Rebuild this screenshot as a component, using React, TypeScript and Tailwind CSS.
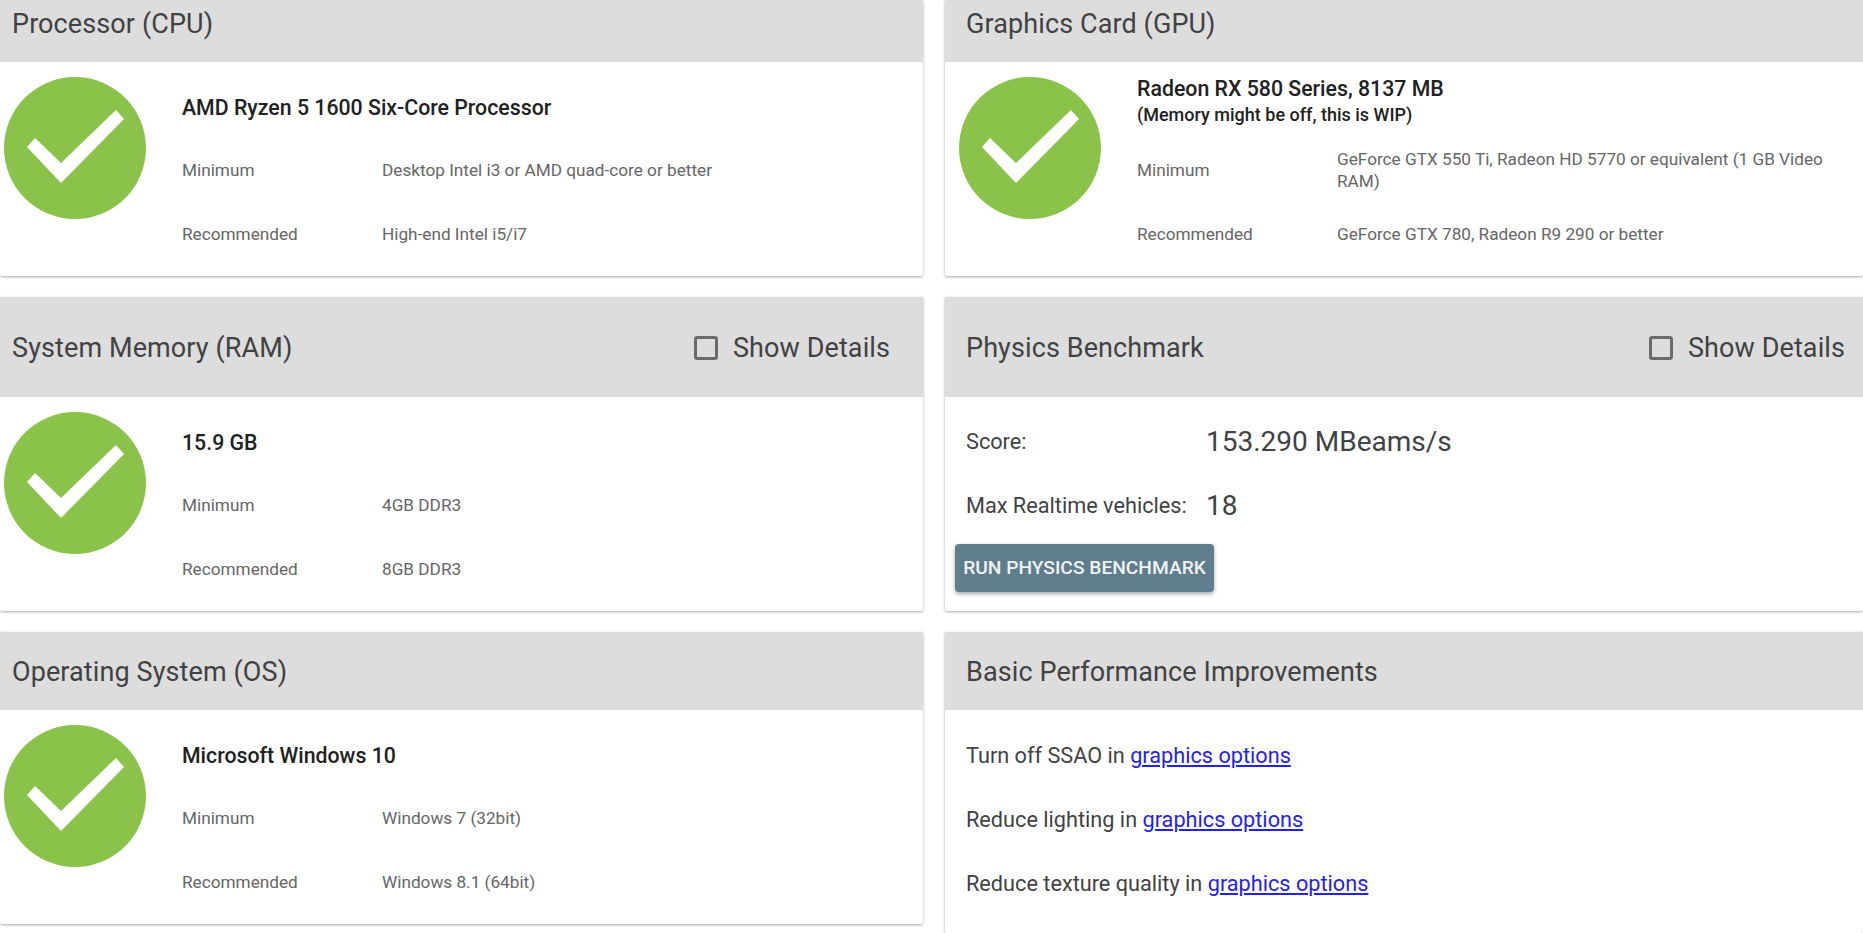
import type { ReactNode } from "react";

const F = "font-['Roboto',sans-serif]";

function Check({ right }: { right?: boolean }) {
  return (
    <svg viewBox="0 0 142 142" className={`w-[142px] h-[142px] shrink-0 ${right ? "ml-[14px]" : "ml-1"}`}>
      <circle cx="71" cy="71" r="71" fill="#8bc34a" />
      <polygon points="23,70 31,61 57,86 112,33 120,42 57,106" fill="#fff" />
    </svg>
  );
}

function ShowDetails() {
  return (
    <label className="flex items-center text-[27px] text-[#424242]">
      <span className="w-[24px] h-[24px] border-[3px] border-[#6b6b6b] rounded-[3px] mr-[15px] -mt-[2px]" />
      Show Details
    </label>
  );
}

function Card({ title, head, children, body, className = "" }: { title: string; head: string; children: ReactNode; body: string; className?: string }) {
  return (
    <section className={`bg-white shadow-[0_1px_3px_rgba(0,0,0,0.35)] rounded-b-[2px] ${className}`}>
      <header className={`${head} bg-[#dddddd] flex items-center justify-between text-[27px] tracking-[0.1px] text-[#424242]`}>
        <span>{title}</span>
      </header>
      <div className={body}>{children}</div>
    </section>
  );
}

function DetailCard({ title, right, children }: { title: string; right?: boolean; children: ReactNode }) {
  return (
    <section className="bg-white shadow-[0_1px_3px_rgba(0,0,0,0.35)] rounded-b-[2px]">
      <header className={`h-[100px] bg-[#dddddd] flex items-center justify-between pt-[3px] text-[27px] tracking-[0.1px] text-[#424242] ${right ? "pl-[21px] pr-[18px]" : "pl-[12px] pr-[33px]"}`}>
        <span>{title}</span>
        <ShowDetails />
      </header>
      <div className="h-[214px]">{children}</div>
    </section>
  );
}

function Row({ label, value, right }: { label: string; value: string; right?: boolean }) {
  return (
    <div className="flex items-center h-[64px] text-[17.2px] leading-[22px] text-[#666666]">
      <div className="w-[200px] shrink-0">{label}</div>
      <div className={right ? "pr-[36px]" : "pr-[16px]"}>{value}</div>
    </div>
  );
}

function Req({ name, sub, min, rec, right }: { name: string; sub?: string; min: string; rec: string; right?: boolean }) {
  return (
    <div className="flex pt-[15px]">
      <Check right={right} />
      <div className="ml-[36px] flex-1 min-w-0">
        <div className="h-[61px] flex flex-col justify-center text-[21.3px] text-[#212121] font-medium">
          <div className="leading-[26px]">{name}</div>
          {sub && <div className="text-[18px] leading-[26px] pb-[12px]">{sub}</div>}
        </div>
        <Row label="Minimum" value={min} right={right} />
        <Row label="Recommended" value={rec} right={right} />
      </div>
    </div>
  );
}

function Tip({ text }: { text: string }) {
  return (
    <div className="h-[64px] flex items-center pl-[21px] text-[21.7px] text-[#424242]">
      <span>
        {text} <a className="text-[#2323e8] underline">graphics options</a>
      </span>
    </div>
  );
}

export default function App() {
  return (
    <div className={`${F} h-[933px] overflow-hidden bg-white grid grid-cols-[923px_918px] gap-x-[22px] gap-y-[21px] grid-rows-[276px_314px_1fr] content-start`}>
      <Card title="Processor (CPU)" head="h-[62px] pl-[12px] pb-[14px]" body="h-[214px]">
        <Req name="AMD Ryzen 5 1600 Six-Core Processor" min="Desktop Intel i3 or AMD quad-core or better" rec="High-end Intel i5/i7" />
      </Card>
      <Card title="Graphics Card (GPU)" head="h-[62px] pl-[21px] pb-[14px]" body="h-[214px]">
        <Req right name="Radeon RX 580 Series, 8137 MB" sub="(Memory might be off, this is WIP)" min="GeForce GTX 550 Ti, Radeon HD 5770 or equivalent (1 GB Video RAM)" rec="GeForce GTX 780, Radeon R9 290 or better" />
      </Card>
      <DetailCard title="System Memory (RAM)">
        <Req name="15.9 GB" min="4GB DDR3" rec="8GB DDR3" />
      </DetailCard>
      <DetailCard title="Physics Benchmark" right>
        <div className="pt-[13px] text-[#424242]">
          <div className="flex items-center h-[64px] pl-[21px]">
            <span className="w-[240px] text-[21.7px]">Score:</span>
            <span className="text-[28px]">153.290 MBeams/s</span>
          </div>
          <div className="flex items-center h-[64px] pl-[21px]">
            <span className="w-[240px] text-[21.7px]">Max Realtime vehicles:</span>
            <span className="text-[28px]">18</span>
          </div>
          <button className="mt-[6px] ml-[10px] w-[259px] h-[48px] bg-[#607d8b] text-[#f0f3f4] text-[19.2px] font-medium rounded-[4px] shadow-[0_2px_4px_rgba(0,0,0,0.35)] whitespace-nowrap">
            RUN PHYSICS BENCHMARK
          </button>
        </div>
      </DetailCard>
      <Card title="Operating System (OS)" head="h-[78px] pl-[12px] pt-[2px]" body="h-[214px]" className="self-start">
        <Req name="Microsoft Windows 10" min="Windows 7 (32bit)" rec="Windows 8.1 (64bit)" />
      </Card>
      <Card title="Basic Performance Improvements" head="h-[78px] pl-[21px] pt-[2px]" body="h-[223px]">
        <div className="pt-[14px]">
          <Tip text="Turn off SSAO in" />
          <Tip text="Reduce lighting in" />
          <Tip text="Reduce texture quality in" />
        </div>
      </Card>
    </div>
  );
}
